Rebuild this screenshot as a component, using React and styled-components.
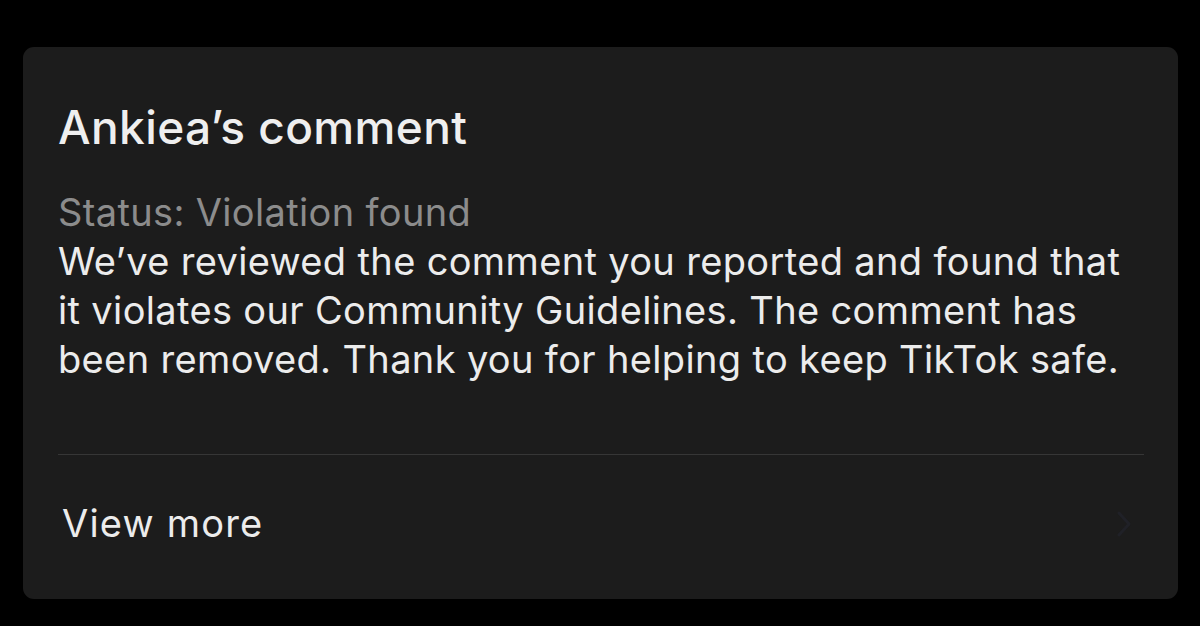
import React from "react";
import styled, { createGlobalStyle } from "styled-components";

const Global = createGlobalStyle`
  html, body { margin: 0; padding: 0; background: #000; }
  body { font-family: Inter, "Liberation Sans", Arial, sans-serif; -webkit-font-smoothing: antialiased; }
  #root { width: 1200px; height: 626px; background: #000; overflow: hidden; padding-top: 47px; box-sizing: border-box; }
`;

const Card = styled.section`
  box-sizing: border-box;
  margin-left: 23px;
  width: 1155px;
  height: 552px;
  background: #1c1c1c;
  border-radius: 11px;
  padding: 52px 34px 0 35px;
  display: flex;
  flex-direction: column;
`;

const Title = styled.h1`
  margin: 0;
  font-size: 46px;
  line-height: 56px;
  font-weight: 500;
  color: #efefef;
  letter-spacing: 0.4px;
`;

const Status = styled.div`
  margin-top: 33px;
  font-size: 38px;
  line-height: 49px;
  color: #8c8c8c;
  letter-spacing: 0.35px;
`;

const Body = styled.p`
  margin: 0;
  font-size: 38px;
  line-height: 49px;
  color: #ececec;
  letter-spacing: 0.35px;
  white-space: nowrap;
`;

const Divider = styled.hr`
  margin: 70px 0 0;
  border: 0;
  height: 1px;
  background: #363636;
`;

const MoreRow = styled.div`
  margin-top: 44px;
  padding-left: 4px;
  display: flex;
  align-items: center;
  justify-content: space-between;
`;

const MoreText = styled.span`
  font-size: 38px;
  line-height: 49px;
  color: #ececec;
  letter-spacing: 1.2px;
`;

const Chevron = styled.svg`
  width: 16px;
  height: 28px;
  margin-right: 12px;
`;

export default function App() {
  return (
    <>
      <Global />
      <Card>
        <Title>Ankiea’s comment</Title>
        <Status>Status: Violation found</Status>
        <Body>
          We’ve reviewed the comment you reported and found that<br />
          it violates our Community Guidelines. The comment has<br />
          been removed. Thank you for helping to keep TikTok safe.
        </Body>
        <Divider />
        <MoreRow>
          <MoreText>View more</MoreText>
          <Chevron viewBox="0 0 16 28" fill="none">
            <path d="M3 3l10 11L3 25" stroke="#202127" strokeWidth="3" strokeLinecap="round" strokeLinejoin="round" />
          </Chevron>
        </MoreRow>
      </Card>
    </>
  );
}
